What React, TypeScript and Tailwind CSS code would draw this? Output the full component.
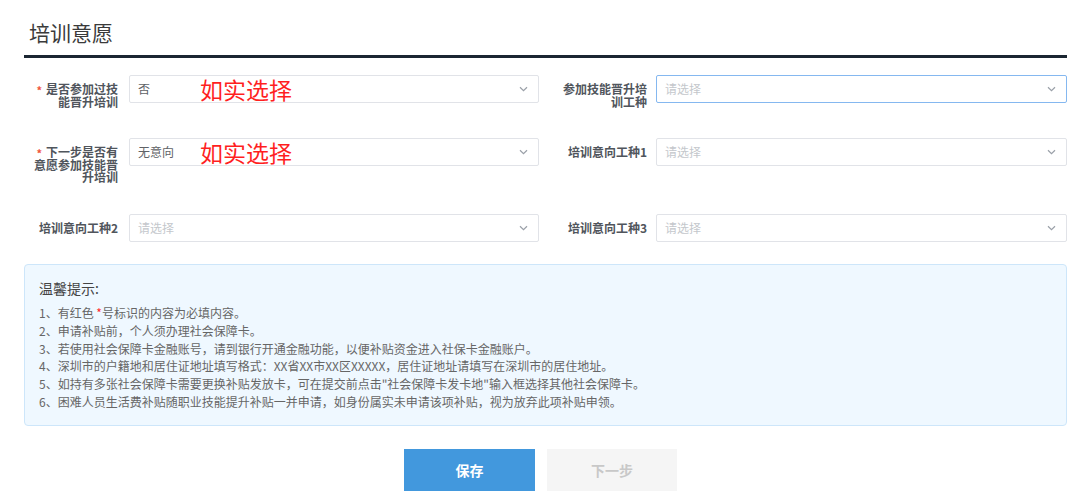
import React from "react";

const FONT = { fontFamily: '"Noto Sans CJK SC", "Noto Sans", sans-serif' };

function Chevron() {
  return (
    <svg width="9" height="6" viewBox="0 0 9 6" className="absolute right-[10px] top-1/2 -translate-y-1/2">
      <path d="M1 1.2 L4.5 4.6 L8 1.2" fill="none" stroke="#9aa0a8" strokeWidth="1.2" />
    </svg>
  );
}

function Select({ value, placeholder, focused, note }: { value?: string; placeholder?: string; focused?: boolean; note?: boolean }) {
  return (
    <div
      className={
        "relative h-[28px] flex-1 bg-white rounded-[2px] border flex items-center pl-[8px] " +
        (focused ? "border-[#85b8f0]" : "border-[#e1e3e8]")
      }
    >
      {value ? (
        <span className="text-[12px] text-[#606266]">{value}</span>
      ) : (
        <span className="text-[12px] text-[#c4c7cc]">{placeholder}</span>
      )}
      {note && (
        <span className="absolute left-[70px] top-1/2 -translate-y-1/2 text-[23px] leading-none text-[#ff1f1f] whitespace-nowrap">
          如实选择
        </span>
      )}
      <Chevron />
    </div>
  );
}

function Label({ lines, required, width, pr }: { lines: string[]; required?: boolean; width: string; pr: string }) {
  return (
    <div className={`${width} ${pr} shrink-0 pt-[8px] text-right text-[12px] font-bold leading-[12.5px] text-[#50555c]`}>
      {lines.map((l, i) => (
        <div key={i} className="whitespace-nowrap">
          {i === 0 && required && <span className="text-[#f0563c] text-[11px] mr-[4px] relative top-[1px]">*</span>}
          {l}
        </div>
      ))}
    </div>
  );
}

export default function App() {
  const tips = [
    "2、申请补贴前，个人须办理社会保障卡。",
    "3、若使用社会保障卡金融账号，请到银行开通金融功能，以便补贴资金进入社保卡金融账户。",
    "4、深圳市的户籍地和居住证地址填写格式：XX省XX市XX区XXXXX，居住证地址请填写在深圳市的居住地址。",
    "5、如持有多张社会保障卡需要更换补贴发放卡，可在提交前点击\"社会保障卡发卡地\"输入框选择其他社会保障卡。",
    "6、困难人员生活费补贴随职业技能提升补贴一并申请，如身份属实未申请该项补贴，视为放弃此项补贴申领。",
  ];
  return (
    <div className="w-[1080px] h-[504px] bg-white overflow-hidden" style={FONT}>
      <div className="ml-[24px] w-[1043px]">
        <div className="h-[55px] pl-[5px] pt-[18px] text-[21px] leading-[28px] text-[#3a3a3a]">培训意愿</div>
        <div className="h-[3px] bg-[#1b2632]" />

        <div className="mt-[17px] flex flex-col">
          <div className="flex items-start mb-[30px]">
            <div className="w-[515px] flex items-start">
              <Label width="w-[105px]" pr="pr-[11px]" required lines={["是否参加过技", "能晋升培训"]} />
              <Select value="否" note />
            </div>
            <div className="flex-1 flex items-start">
              <Label width="w-[117px]" pr="pr-[9px]" lines={["参加技能晋升培", "训工种"]} />
              <Select placeholder="请选择" focused />
            </div>
          </div>

          <div className="flex items-start mb-[30.5px]">
            <div className="w-[515px] flex items-start">
              <Label width="w-[105px]" pr="pr-[11px]" required lines={["下一步是否有", "意愿参加技能晋", "升培训"]} />
              <Select value="无意向" note />
            </div>
            <div className="flex-1 flex items-start">
              <Label width="w-[117px]" pr="pr-[9px]" lines={["培训意向工种1"]} />
              <Select placeholder="请选择" />
            </div>
          </div>

          <div className="flex items-start">
            <div className="w-[515px] flex items-start">
              <Label width="w-[105px]" pr="pr-[11px]" lines={["培训意向工种2"]} />
              <Select placeholder="请选择" />
            </div>
            <div className="flex-1 flex items-start">
              <Label width="w-[117px]" pr="pr-[9px]" lines={["培训意向工种3"]} />
              <Select placeholder="请选择" />
            </div>
          </div>
        </div>

        <div className="mt-[22px] h-[162px] rounded-[4px] border border-[#cde6fa] bg-[#eff8ff] pl-[14px] pt-[13px]">
          <div className="text-[14px] leading-[20px] text-[#444]">温馨提示:</div>
          <div className="mt-[6px] text-[12px] leading-[17.8px] text-[#666]">
            <div>
              1、有红色 <span className="text-[#ff2a2a]">*</span>号标识的内容为必填内容。
            </div>
            {tips.map((t, i) => (
              <div key={i}>{t}</div>
            ))}
          </div>
        </div>
      </div>

      <div className="mt-[23px] flex justify-center gap-[12px] pl-[1px]">
        <button className="w-[131px] h-[42px] bg-[#4298dd] text-white text-[14px] font-bold">保存</button>
        <button className="w-[130px] h-[42px] bg-[#f5f5f5] text-[#c8c8c8] text-[14px] font-bold">下一步</button>
      </div>
    </div>
  );
}
